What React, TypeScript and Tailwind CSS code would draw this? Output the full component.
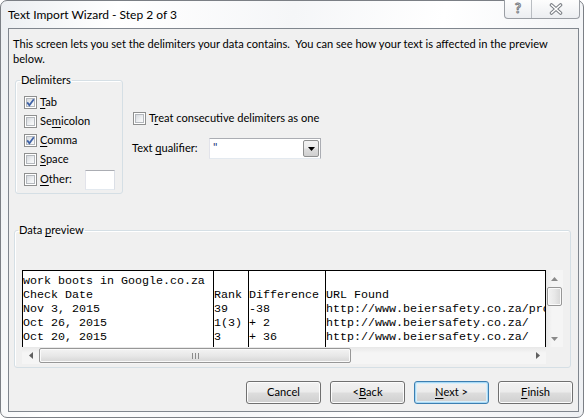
import React from 'react';

const UI = "font-['Segoe_UI',Lato,'Noto_Sans',sans-serif]";
const MONO = "font-['Liberation_Mono','Courier_New',monospace]";

function Check({ on }: { on?: boolean }) {
  return (
    <span className="relative flex h-[13px] w-[13px] shrink-0 items-center justify-center border border-[#8e8f8f] bg-white">
      <span className="h-[9px] w-[9px] border border-[#b4b8bd] bg-[linear-gradient(135deg,#d6d9dd_0%,#eef0f2_60%,#fbfbfb_100%)]" />
      {on && (
        <svg className="absolute left-0 top-0" width="11" height="11" viewBox="0 0 11 11">
          <path d="M2.2 5.4 L4.4 8.2 L8.8 2.2" fill="none" stroke="#3f62a6" strokeWidth="1.8" />
        </svg>
      )}
    </span>
  );
}

function Key({ k }: { k: string }) {
  return <span className="underline underline-offset-[2px]">{k}</span>;
}

function Row({ on, children, tall }: { on?: boolean; children: React.ReactNode; tall?: boolean }) {
  return (
    <div className={`flex items-center gap-[3px] ${tall ? 'h-[21px]' : 'h-[19px]'}`}>
      <Check on={on} />
      {children}
    </div>
  );
}

function Btn({ children, focus }: { children: React.ReactNode; focus?: boolean }) {
  return (
    <div
      className={`flex h-[23px] w-[75px] items-center justify-center rounded-[3px] border bg-[linear-gradient(to_bottom,#f2f2f2_0%,#ebebeb_48%,#dddddd_52%,#cfcfcf_100%)] ${
        focus
          ? 'border-[#3c7fb1] shadow-[inset_0_0_0_1px_#a9d9f5,inset_0_0_0_2px_#d8effb]'
          : 'border-[#707070] shadow-[inset_0_0_0_1px_#fcfcfc]'
      }`}
    >
      {children}
    </div>
  );
}

function Tri({ dir, color = '#7d7d7d' }: { dir: 'up' | 'down' | 'left' | 'right'; color?: string }) {
  const pts = {
    up: '0,4 7,4 3.5,0',
    down: '0,0 7,0 3.5,4',
    left: '4,0 4,7 0,3.5',
    right: '0,0 0,7 4,3.5',
  }[dir];
  const w = dir === 'up' || dir === 'down' ? 7 : 4;
  const h = dir === 'up' || dir === 'down' ? 4 : 7;
  return (
    <svg width={w} height={h} viewBox={`0 0 ${w} ${h}`}>
      <polygon points={pts} fill={color} />
    </svg>
  );
}

const columns = [
  { cls: 'w-[190px]', cells: ['work boots in Google.co.za', 'Check Date', 'Nov 3, 2015', 'Oct 26, 2015', 'Oct 20, 2015'] },
  { cls: 'w-[35px] border-l border-black', cells: ['', 'Rank', '39', '1(3)', '3'] },
  { cls: 'w-[77px] border-l border-black', cells: ['', 'Difference', '-38', '+ 2', '+ 36'] },
  {
    cls: 'flex-1 border-l border-black',
    cells: ['', 'URL Found', 'http://www.beiersafety.co.za/products/', 'http://www.beiersafety.co.za/', 'http://www.beiersafety.co.za/'],
  },
];

export default function App() {
  return (
    <div className={`h-[419px] w-[585px] overflow-hidden bg-white text-[11.1px] text-black ${UI}`}>
      <div className="relative h-[418px] w-[584px] rounded-[7px] border border-[#7b7f85] bg-[linear-gradient(100deg,#eceff2_0%,#ffffff_18%,#f5f6f8_45%,#ffffff_68%,#eef0f3_100%)] pl-[7px]">
        {/* title bar */}
        <div className="flex h-[27px] items-center pt-[1px] text-[12px]">Text Import Wizard - Step 2 of 3</div>

        <div className="absolute right-[3px] top-[-1px] flex h-[19px] overflow-hidden rounded-b-[4px] border border-t-0 border-[#9a9ea4] bg-[linear-gradient(to_bottom,#fdfdfd,#eceef1)]">
          <div className="flex w-[27px] items-center justify-center border-r border-[#b9bdc2] pb-[1px] text-[13px] font-bold text-white [-webkit-text-stroke:1px_#7a7e84]">
            ?
          </div>
          <div className="flex w-[47px] items-center justify-center">
            <svg width="14" height="12" viewBox="0 0 14 12">
              <path d="M2.5 2 L11.5 10 M11.5 2 L2.5 10" stroke="#7a7e84" strokeWidth="3.6" strokeLinecap="round" />
              <path d="M2.5 2 L11.5 10 M11.5 2 L2.5 10" stroke="#ffffff" strokeWidth="1.6" strokeLinecap="round" />
            </svg>
          </div>
        </div>

        {/* client area */}
        <div className="h-[384px] w-[571px] overflow-hidden border border-[#80868e] bg-[#f0f0f0]">
          <p className="ml-[4px] mt-[7px] whitespace-nowrap leading-[15px]">
            This screen lets you set the delimiters your data contains.{'\u00a0 '}You can see how your text is affected in the preview
            <br />
            below.
          </p>

          <div className="mt-[7px] flex">
            <fieldset className="ml-[6px] w-[108px] rounded-[3px] border border-[#d5dfe5] shadow-[inset_1px_1px_0_#ffffff]">
              <legend className="ml-[4px] px-[1px] leading-[14px]">Delimiters</legend>
              <div className="pb-[3px] pl-[8px] pt-[6px]">
                <Row on>
                  <span>
                    <Key k="T" />ab
                  </span>
                </Row>
                <Row>
                  <span>
                    Se<Key k="m" />icolon
                  </span>
                </Row>
                <Row on>
                  <span>
                    <Key k="C" />omma
                  </span>
                </Row>
                <Row>
                  <span>
                    <Key k="S" />pace
                  </span>
                </Row>
                <Row tall>
                  <span className="w-[42px]">
                    <Key k="O" />ther:
                  </span>
                  <span className="h-[20px] w-[30px] border border-[#abadb3] border-l-[#e2e3ea] border-r-[#dbdfe6] border-b-[#e3e9ef] bg-white" />
                </Row>
              </div>
            </fieldset>

            <div className="ml-[9px] pt-[36px]">
              <div className="ml-[1px] flex h-[19px] items-center gap-[3px]">
                <Check />
                <span>
                  T<Key k="r" />eat consecutive delimiters as one
                </span>
              </div>
              <div className="mt-[10px] flex h-[21px] items-center">
                <span className="w-[77px]">
                  Text <Key k="q" />ualifier:
                </span>
                <div className="flex h-[21px] w-[112px] border border-[#abadb3] border-b-[#e3e9ef] border-l-[#e2e3ea] bg-white">
                  <span className="flex-1 pl-[3px] text-[12px] leading-[16px] text-[#1a3a7a]">"</span>
                  <div className="m-[1px] flex w-[16px] items-center justify-center rounded-[2px] border border-[#8e8f8f] bg-[linear-gradient(to_bottom,#f2f2f2_0%,#ebebeb_48%,#dddddd_52%,#cfcfcf_100%)]">
                    <Tri dir="down" color="#000000" />
                  </div>
                </div>
              </div>
            </div>
          </div>

          <fieldset className="ml-[5px] mt-[29px] w-[557px] rounded-[3px] border border-[#d5dfe5] shadow-[inset_1px_1px_0_#ffffff]">
            <legend className="ml-[3px] px-[1px] leading-[14px]">
              Data <Key k="p" />review
            </legend>
            <div className="grid grid-cols-[524px_17px] grid-rows-[77px_17px] pb-[3px] pl-[7px] pt-[33px]">
              <div className={`flex overflow-hidden border-l border-r border-t border-black bg-white text-[11.67px] leading-[14px] ${MONO}`}>
                {columns.map((c, i) => (
                  <div key={i} className={`flex flex-col overflow-hidden whitespace-pre pt-[3px] ${c.cls}`}>
                    {c.cells.map((t, j) => (
                      <div key={j} className="h-[14px]">
                        {t}
                      </div>
                    ))}
                  </div>
                ))}
              </div>

              {/* vertical scrollbar */}
              <div className="flex flex-col bg-[linear-gradient(to_right,#e8e8e8,#f5f5f5_35%,#f5f5f5)]">
                <div className="flex h-[17px] items-center justify-center">
                  <Tri dir="up" color="#8a8a8a" />
                </div>
                <div className="mx-[1px] h-[19px] rounded-[2px] border border-[#979797] bg-[linear-gradient(to_right,#f3f3f3,#e8e8e8_50%,#d6d6d6)] shadow-[inset_0_0_0_1px_#fafafa]" />
                <div className="flex-1" />
                <div className="flex h-[17px] items-center justify-center">
                  <Tri dir="down" color="#8a8a8a" />
                </div>
              </div>

              {/* horizontal scrollbar */}
              <div className="flex bg-[linear-gradient(to_bottom,#e8e8e8,#f5f5f5_35%,#f5f5f5)]">
                <div className="flex w-[17px] items-center justify-center">
                  <Tri dir="left" color="#606060" />
                </div>
                <div className="my-[1px] flex w-[312px] items-center justify-center rounded-[2px] border border-[#979797] bg-[linear-gradient(to_bottom,#f3f3f3,#e8e8e8_50%,#d6d6d6)] shadow-[inset_0_0_0_1px_#fafafa]">
                  <svg width="7" height="6" viewBox="0 0 7 6">
                    <path d="M0.5 0 V6 M3.5 0 V6 M6.5 0 V6" stroke="#8a8a8a" strokeWidth="1" />
                  </svg>
                </div>
                <div className="flex-1" />
                <div className="flex w-[17px] items-center justify-center">
                  <Tri dir="right" color="#606060" />
                </div>
              </div>
              <div className="bg-[#f0f0f0]" />
            </div>
          </fieldset>

          <div className="mt-[13px] flex justify-end gap-[9px] pr-[5px]">
            <Btn>Cancel</Btn>
            <Btn>
              {'< '}
              <Key k="B" />
              ack
            </Btn>
            <Btn focus>
              <Key k="N" />
              ext {'>'}
            </Btn>
            <Btn>
              <Key k="F" />
              inish
            </Btn>
          </div>
        </div>
      </div>
    </div>
  );
}
